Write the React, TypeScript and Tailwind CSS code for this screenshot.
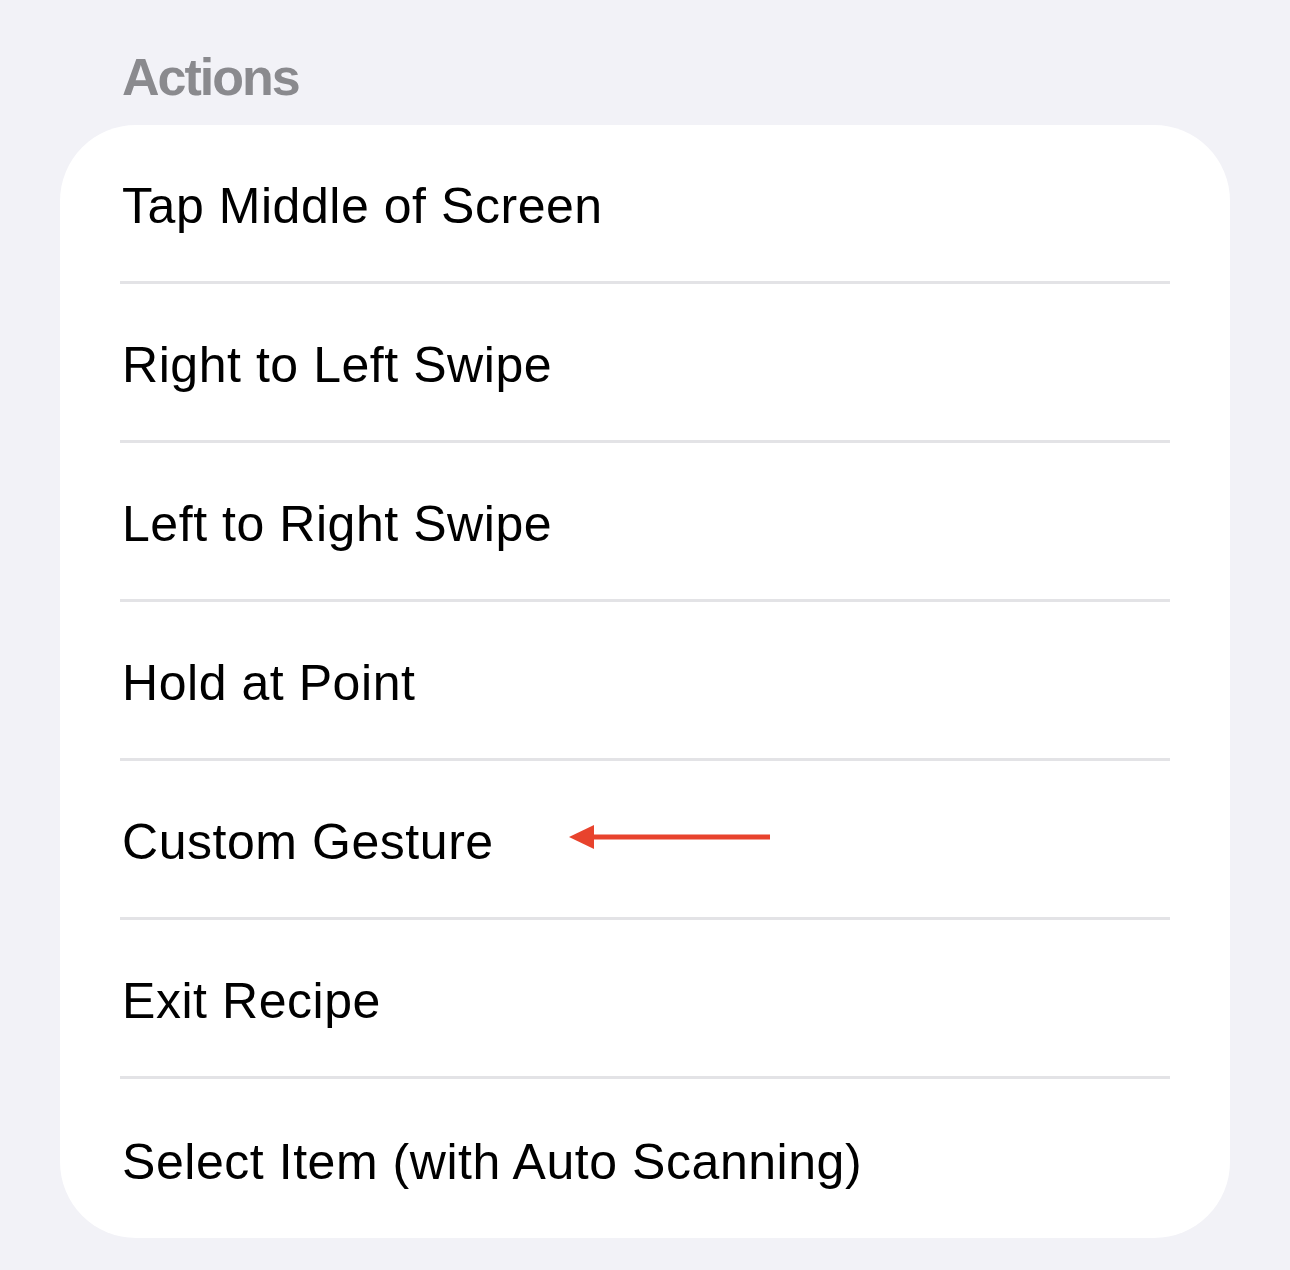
const actions = [
  "Tap Middle of Screen",
  "Right to Left Swipe",
  "Left to Right Swipe",
  "Hold at Point",
  "Custom Gesture",
  "Exit Recipe",
  "Select Item (with Auto Scanning)",
];

function Arrow() {
  return (
    <svg width="204" height="28" viewBox="0 0 204 28" className="ml-[74px] mb-[5px]">
      <path d="M1 14 L26 2 L26 26 Z" fill="#e8432d" />
      <rect x="24" y="11.5" width="178" height="5" fill="#e8432d" />
    </svg>
  );
}

export default function App() {
  return (
    <div
      className="min-h-[1270px] w-full bg-[#f2f2f7]"
      style={{ fontFamily: '"Liberation Sans", Arial, sans-serif' }}
    >
      <div className="h-[125px] flex items-end pb-[22px] pl-[122px]">
        <h2 className="text-[52px] leading-none font-bold tracking-[-2px] text-[#8a8a8e]">
          Actions
        </h2>
      </div>

      <div className="mx-[60px] bg-white rounded-[76px] overflow-hidden">
        {actions.map((label, i) => (
          <div key={label} className="px-[60px]">
            <div
              className={`h-[159px] flex items-center ${
                i < actions.length - 1 ? "border-b-[3px] border-[#e3e3e6]" : ""
              }`}
            >
              <span className="text-[50px] leading-none tracking-[0.55px] text-black pl-[2px] pt-[6px]">
                {label}
              </span>
              {label === "Custom Gesture" && <Arrow />}
            </div>
          </div>
        ))}
      </div>
    </div>
  );
}
